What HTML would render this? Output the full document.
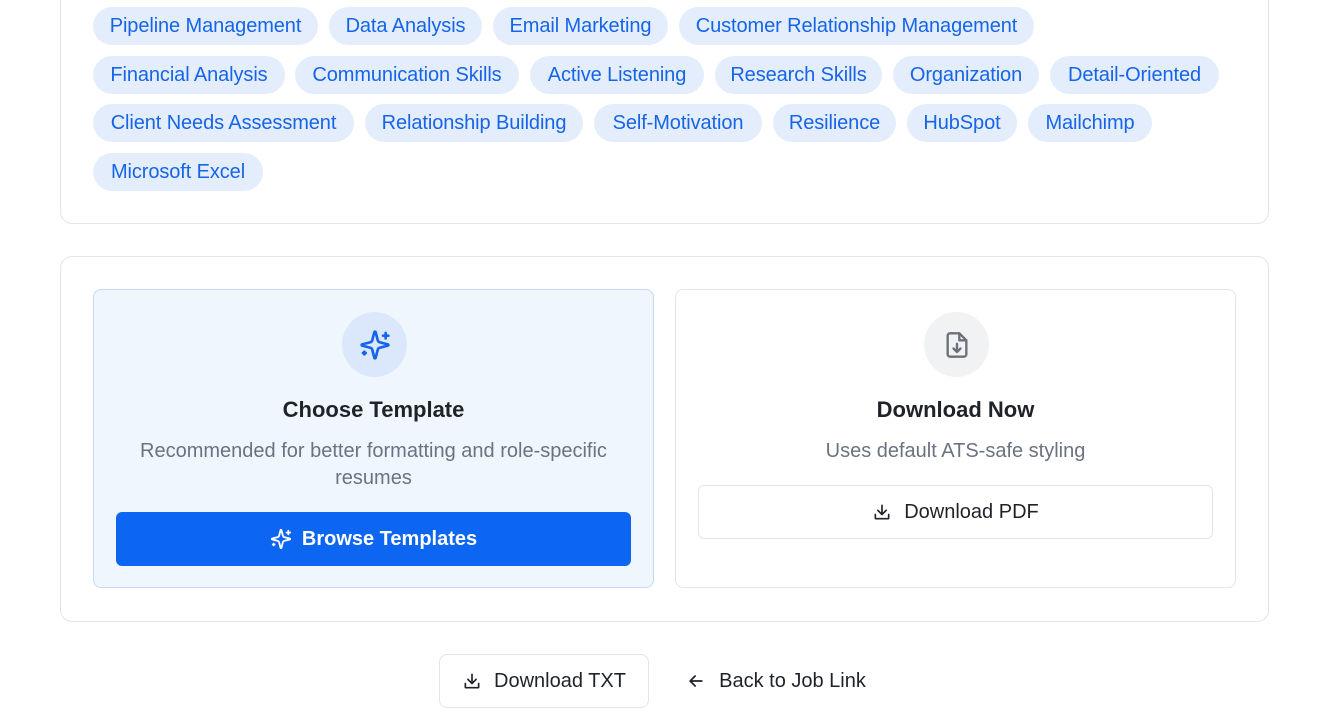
<!DOCTYPE html><html><head><style>
*{box-sizing:border-box;margin:0;padding:0}
body{width:1319px;height:718px;background:#fff;font-family:"Liberation Sans",sans-serif;position:relative;overflow:hidden;color:#1f2329}
.card{position:absolute;left:60px;width:1209px;border:1px solid #e3e5e8;border-radius:12px;background:#fff}
.chip{position:absolute;height:38px;border-radius:19px;background:#e3edfc;color:#1665e8;font-size:20px;display:flex;align-items:center;justify-content:center;white-space:nowrap;letter-spacing:-0.1px}
.panel{position:absolute;top:289px;width:561px;height:299px;border-radius:8px}
.circ{position:absolute;top:22px;left:248px;width:65px;height:65px;border-radius:50%;display:flex;align-items:center;justify-content:center}
.t{position:absolute;top:107px;width:100%;text-align:center;font-size:22px;font-weight:bold;color:#1f2329}
.d{position:absolute;width:100%;text-align:center;font-size:20px;color:#6b7280;line-height:27px}
.btn{position:absolute;display:flex;align-items:center;justify-content:center;gap:12px;font-size:20px;border-radius:6px}
</style></head><body>
<div class="card" style="top:-20px;height:244px"></div>
<div class="chip" style="left:93px;top:7px;width:225px">Pipeline Management</div>
<div class="chip" style="left:329px;top:7px;width:153px">Data Analysis</div>
<div class="chip" style="left:493px;top:7px;width:175px">Email Marketing</div>
<div class="chip" style="left:679px;top:7px;width:355px">Customer Relationship Management</div>
<div class="chip" style="left:93px;top:56px;width:192px">Financial Analysis</div>
<div class="chip" style="left:295px;top:56px;width:224px">Communication Skills</div>
<div class="chip" style="left:530px;top:56px;width:174px">Active Listening</div>
<div class="chip" style="left:715px;top:56px;width:167px">Research Skills</div>
<div class="chip" style="left:893px;top:56px;width:146px">Organization</div>
<div class="chip" style="left:1050px;top:56px;width:169px">Detail-Oriented</div>
<div class="chip" style="left:93px;top:104px;width:261px">Client Needs Assessment</div>
<div class="chip" style="left:365px;top:104px;width:218px">Relationship Building</div>
<div class="chip" style="left:594px;top:104px;width:168px">Self-Motivation</div>
<div class="chip" style="left:773px;top:104px;width:123px">Resilience</div>
<div class="chip" style="left:907px;top:104px;width:110px">HubSpot</div>
<div class="chip" style="left:1028px;top:104px;width:124px">Mailchimp</div>
<div class="chip" style="left:93px;top:153px;width:170px">Microsoft Excel</div>

<div class="card" style="top:256px;height:366px"></div>
<div class="panel" style="left:93px;background:#f0f6fe;border:1px solid #c6d9f4">
 <div class="circ" style="background:#dbe8fb"><svg width="32" height="32" viewBox="0 0 24 24" fill="none" stroke="#1665e8" stroke-width="2" stroke-linecap="round" stroke-linejoin="round"><path d="M9.937 15.5A2 2 0 0 0 8.5 14.063l-6.135-1.582a.5.5 0 0 1 0-.962L8.5 9.936A2 2 0 0 0 9.937 8.5l1.582-6.135a.5.5 0 0 1 .963 0L14.063 8.5A2 2 0 0 0 15.5 9.937l6.135 1.581a.5.5 0 0 1 0 .964L15.5 14.063a2 2 0 0 0-1.437 1.437l-1.582 6.135a.5.5 0 0 1-.963 0z"/><path d="M20 3v4M22 5h-4M4 17v2M5 18H3"/></svg></div>
 <div class="t">Choose Template</div>
 <div class="d" style="top:148px">Recommended for better formatting and role-specific<br>resumes</div>
 <div class="btn" style="left:22px;top:222px;width:515px;height:54px;background:#0c66f2;color:#fff;font-weight:bold;gap:10px"><svg width="22" height="22" viewBox="0 0 24 24" fill="none" stroke="#fff" stroke-width="2" stroke-linecap="round" stroke-linejoin="round"><path d="M9.937 15.5A2 2 0 0 0 8.5 14.063l-6.135-1.582a.5.5 0 0 1 0-.962L8.5 9.936A2 2 0 0 0 9.937 8.5l1.582-6.135a.5.5 0 0 1 .963 0L14.063 8.5A2 2 0 0 0 15.5 9.937l6.135 1.581a.5.5 0 0 1 0 .964L15.5 14.063a2 2 0 0 0-1.437 1.437l-1.582 6.135a.5.5 0 0 1-.963 0z"/><path d="M20 3v4M22 5h-4M4 17v2M5 18H3"/></svg>Browse Templates</div>
</div>
<div class="panel" style="left:675px;border:1px solid #e3e5e8;background:#fff">
 <div class="circ" style="background:#f1f2f4"><svg width="28" height="28" viewBox="0 0 24 24" fill="none" stroke="#6b7078" stroke-width="2" stroke-linecap="round" stroke-linejoin="round"><path d="M14 2H6a2 2 0 0 0-2 2v16a2 2 0 0 0 2 2h12a2 2 0 0 0 2-2V8z"/><path d="M14 2v6h6"/><path d="M12 11v7M9 15l3 3 3-3"/></svg></div>
 <div class="t">Download Now</div>
 <div class="d" style="top:148px">Uses default ATS-safe styling</div>
 <div class="btn" style="left:22px;top:195px;width:515px;height:54px;border:1px solid #e3e5e8;color:#1f2329"><svg width="20" height="20" viewBox="0 0 24 24" fill="none" stroke="#1f2329" stroke-width="2" stroke-linecap="round" stroke-linejoin="round"><path d="M4 15v4a1 1 0 0 0 1 1h14a1 1 0 0 0 1-1v-4"/><path d="M12 4v11M7 10l5 5 5-5"/></svg>Download PDF</div>
</div>

<div class="btn" style="left:439px;top:654px;width:210px;height:54px;border:1px solid #e3e5e8;border-radius:8px"><svg width="20" height="20" viewBox="0 0 24 24" fill="none" stroke="#1f2329" stroke-width="2" stroke-linecap="round" stroke-linejoin="round"><path d="M4 15v4a1 1 0 0 0 1 1h14a1 1 0 0 0 1-1v-4"/><path d="M12 4v11M7 10l5 5 5-5"/></svg>Download TXT</div>
<div class="btn" style="left:676px;top:654px;width:200px;height:54px;gap:13px"><svg width="20" height="20" viewBox="0 0 24 24" fill="none" stroke="#1f2329" stroke-width="2" stroke-linecap="round" stroke-linejoin="round"><path d="M19 12H5M11 6l-6 6 6 6"/></svg>Back to Job Link</div>
</body></html>
